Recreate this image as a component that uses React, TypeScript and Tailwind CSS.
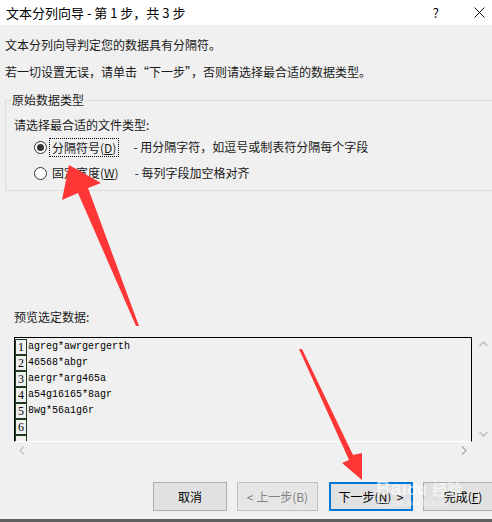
import React from 'react';

const rows = ['agreg*awrgergerth', '46568*abgr', 'aergr*arg465a', 'a54g16165*8agr', '8wg*56a1g6r', '', ''];

function Radio({ checked }: { checked?: boolean }) {
    return (
        <span className="w-[13px] h-[13px] rounded-full border border-[#333] bg-white flex items-center justify-center shrink-0">
            {checked && <span className="w-[7px] h-[7px] rounded-full bg-[#333]" />}
        </span>
    );
}

function Btn({ children, disabled, primary }: { children: React.ReactNode; disabled?: boolean; primary?: boolean }) {
    return (
        <div
            className={
                'h-[29px] flex items-center justify-center text-[12px] ' +
                (primary ? 'border-2 border-[#0078d7] text-black bg-[#e1e1e1]' : disabled ? 'border border-[#bfbfbf] text-[#838383] bg-[#e6e6e6]' : 'border border-[#adadad] text-black bg-[#e1e1e1]')
            }
        >
            {children}
        </div>
    );
}

export default function App() {
    return (
        <div className="relative w-[492px] h-[522px] overflow-hidden bg-[#f0f0f0] text-[#1a1a1a]" style={{ fontFamily: '"Noto Sans CJK SC", "Noto Sans", sans-serif' }}>
            {/* title bar */}
            <div className="h-[25px] bg-white flex items-center pl-[6px] text-[13px] text-black">
                <span>文本分列向导 - 第 1 步，共 3 步</span>
                <span className="ml-auto mr-[35px] text-[13px]">?</span>
                <svg width="11" height="11" viewBox="0 0 11 11" className="mr-[7px]">
                    <path d="M0.5 0.5 L10.5 10.5 M10.5 0.5 L0.5 10.5" stroke="#111" strokeWidth="1" />
                </svg>
            </div>

            <div className="pl-[5px] text-[12px] leading-[16px]">
                <div className="mt-[12px]">文本分列向导判定您的数据具有分隔符。</div>
                <div className="mt-[11px]">若一切设置无误，请单击“下一步”，否则请选择最合适的数据类型。</div>
            </div>

            {/* group box */}
            <div className="relative ml-[5px] mt-[20px] w-[500px] h-[91px] border border-[#dcdcdc]">
                <span className="absolute -top-[9px] left-[5px] px-[1px] bg-[#f0f0f0] text-[12px] leading-[16px]">原始数据类型</span>
                <div className="pl-[8px] pt-[16px] text-[12px] leading-[16px]">
                    <div>请选择最合适的文件类型:</div>
                    <div className="flex items-center mt-[4px] h-[20px]">
                        <span className="ml-[20px]"><Radio checked /></span>
                        <span className="ml-[2px] px-[2px] border border-dotted border-black leading-[17px]">
                            分隔符号(<span className="underline">D</span>)
                        </span>
                        <span className="ml-[14px]">- 用分隔字符，如逗号或制表符分隔每个字段</span>
                    </div>
                    <div className="flex items-center mt-[6px] h-[20px]">
                        <span className="ml-[20px]"><Radio /></span>
                        <span className="ml-[3px] px-[2px]">
                            固定宽度(<span className="underline">W</span>)
                        </span>
                        <span className="ml-[14px]">- 每列字段加空格对齐</span>
                    </div>
                </div>
            </div>

            <div className="pl-[14px] mt-[118px] text-[12px] leading-[16px]">预览选定数据:</div>

            {/* preview */}
            <div className="flex mt-[12px]">
                <div className="ml-[14px] w-[458px] h-[105px] border-t border-l border-r border-black border-b border-b-white overflow-hidden pt-[1px]">
                    {rows.map((r, i) => (
                        <div key={i} className="flex h-[16px] items-stretch">
                            <span className="w-[12px] border border-[#1f3a1f] flex items-end justify-center text-[12px] leading-[14px] text-black" style={{ fontFamily: '"Liberation Serif", serif' }}>
                                {i < 6 ? i + 1 : ''}
                            </span>
                            <span className="pl-[1px] text-[10px] leading-[16px] text-black" style={{ fontFamily: '"Liberation Mono", monospace' }}>{r}</span>
                        </div>
                    ))}
                </div>
                <div className="ml-[3px] w-[17px] h-[104px] flex flex-col items-center justify-between py-[4px]">
                    <svg width="9" height="6" viewBox="0 0 9 6"><path d="M0.5 5 L4.5 1 L8.5 5" stroke="#bcbcbc" strokeWidth="1.3" fill="none" /></svg>
                    <svg width="9" height="6" viewBox="0 0 9 6"><path d="M0.5 1 L4.5 5 L8.5 1" stroke="#bcbcbc" strokeWidth="1.3" fill="none" /></svg>
                </div>
            </div>
            <div className="flex items-center justify-between ml-[19px] w-[448px] h-[16px]">
                <svg width="6" height="9" viewBox="0 0 6 9"><path d="M5 0.5 L1 4.5 L5 8.5" stroke="#c4c4c4" strokeWidth="1.3" fill="none" /></svg>
                <svg width="6" height="9" viewBox="0 0 6 9"><path d="M1 0.5 L5 4.5 L1 8.5" stroke="#a8a8a8" strokeWidth="1.3" fill="none" /></svg>
            </div>

            {/* buttons */}
            <div className="flex mt-[24px] ml-[153px]">
                <div className="w-[74px] shrink-0"><Btn>取消</Btn></div>
                <div className="w-[81px] shrink-0 ml-[10px]"><Btn disabled>&lt; 上一步(B)</Btn></div>
                <div className="w-[84px] shrink-0 ml-[11px]"><Btn primary>下一步(<span className="underline">N</span>) &nbsp;&gt;</Btn></div>
                <div className="w-[80px] shrink-0 ml-[10px]"><Btn>完成(<span className="underline">F</span>)</Btn></div>
            </div>
            <div className="absolute left-0 right-0 bottom-0 h-[3px] bg-[#5f5f5f]" />

            {/* watermark */}
            <div className="absolute left-[376px] top-[478px] text-white/60 text-[20px] font-bold leading-none pointer-events-none" style={{ fontFamily: '"Liberation Sans", sans-serif' }}>
                Bai<span className="text-[16px]">du</span> <span className="text-[15px]" style={{ fontFamily: '"Noto Sans CJK SC", sans-serif' }}>经验</span>
                <div className="text-[9px] font-normal mt-[1px]">jingyan.baidu.com</div>
            </div>

            {/* red arrows */}
            <svg className="absolute inset-0 pointer-events-none" width="492" height="522" viewBox="0 0 492 522">
                <polygon points="69,165 101,183 88,188 139,326 136,326 78,193 62,200" fill="#ff3636" />
                <polygon points="299,349 302,349 353,455 362,453 362,480 342,463 349,460" fill="#ff3636" />
            </svg>
        </div>
    );
}
